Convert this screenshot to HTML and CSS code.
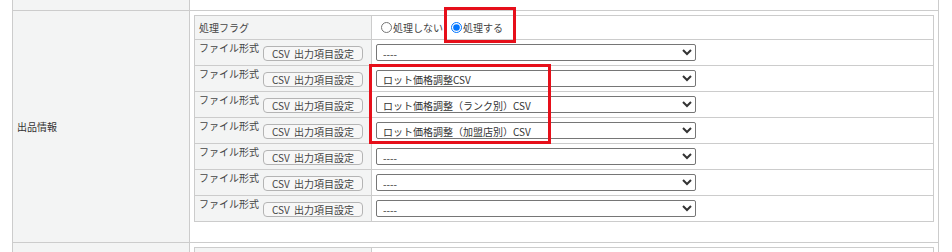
FILE: index.html
```html
<!DOCTYPE html>
<html lang="ja">
<head>
<meta charset="utf-8">
<title>出品情報</title>
<link rel="stylesheet" href="styles.css">
</head>
<body>
<div class="frame">
  <div class="row row-top"><div class="head"></div><div class="body"></div></div>
  <div class="row row-main">
    <div class="head"><span>出品情報</span></div>
    <div class="body">
      <div class="inner">
        <div class="irow irow-flag">
          <div class="ilabel"><span class="lbl lbl-flag">処理フラグ</span></div>
          <div class="ival ival-flag">
            <label class="opt"><input type="radio" name="flag" class="radio">処理しない</label>
            <label class="opt"><input type="radio" name="flag" class="radio" checked>処理する</label>
          </div>
        </div>
        <div class="irow">
          <div class="ilabel"><span class="lbl">ファイル形式</span><button class="btn" type="button">CSV 出力項目設定</button></div>
          <div class="ival"><select class="sel"><option>----</option></select></div>
        </div>
        <div class="irow">
          <div class="ilabel"><span class="lbl">ファイル形式</span><button class="btn" type="button">CSV 出力項目設定</button></div>
          <div class="ival"><select class="sel"><option>ロット価格調整CSV</option></select></div>
        </div>
        <div class="irow">
          <div class="ilabel"><span class="lbl">ファイル形式</span><button class="btn" type="button">CSV 出力項目設定</button></div>
          <div class="ival"><select class="sel"><option>ロット価格調整（ランク別）CSV</option></select></div>
        </div>
        <div class="irow">
          <div class="ilabel"><span class="lbl">ファイル形式</span><button class="btn" type="button">CSV 出力項目設定</button></div>
          <div class="ival"><select class="sel"><option>ロット価格調整（加盟店別）CSV</option></select></div>
        </div>
        <div class="irow">
          <div class="ilabel"><span class="lbl">ファイル形式</span><button class="btn" type="button">CSV 出力項目設定</button></div>
          <div class="ival"><select class="sel"><option>----</option></select></div>
        </div>
        <div class="irow">
          <div class="ilabel"><span class="lbl">ファイル形式</span><button class="btn" type="button">CSV 出力項目設定</button></div>
          <div class="ival"><select class="sel"><option>----</option></select></div>
        </div>
        <div class="irow">
          <div class="ilabel"><span class="lbl">ファイル形式</span><button class="btn" type="button">CSV 出力項目設定</button></div>
          <div class="ival"><select class="sel"><option>----</option></select></div>
        </div>
      </div>
    </div>
  </div>
  <div class="row row-next">
    <div class="head"></div>
    <div class="body">
      <div class="inner inner-next">
        <div class="irow irow-next"><div class="ilabel"></div><div class="ival"></div></div>
      </div>
    </div>
  </div>
</div>
<div class="mark mark-flag"></div>
<div class="mark mark-csv"></div>
</body>
</html>
```

FILE: styles.css
```css
html, body {
  margin: 0;
  padding: 0;
  background: #ffffff;
}
body {
  position: relative;
  height: 252px;
  overflow: hidden;
  font-family: "Noto Sans CJK JP", "Noto Sans", sans-serif;
  font-size: 10px;
  color: #333333;
}
.frame {
  margin-left: 12px;
  width: 927px;
  box-sizing: border-box;
  border-left: 1px solid #cccccc;
  border-right: 1px solid #cccccc;
}
.row {
  display: grid;
  grid-template-columns: 177px 1fr;
  border-bottom: 1px solid #cccccc;
}
.head {
  background: #f3f4f4;
  border-right: 1px solid #cccccc;
  box-sizing: border-box;
  display: flex;
  align-items: center;
  padding-left: 4px;
}
.row-top {
  height: 10px;
}
.row-main .body {
  padding: 4px 4px 20px 4px;
}
.row-next {
  height: 9px;
  overflow: hidden;
  border-bottom: none;
}
.row-next .body {
  padding: 4px 4px 0 4px;
}
.inner {
  border: 1px solid #cccccc;
}
.inner-next {
  border-bottom: none;
}
.irow {
  display: grid;
  grid-template-columns: 177px 1fr;
  height: 25px;
}
.irow + .irow {
  border-top: 1px solid #cccccc;
}
.irow-flag {
  height: 23px;
}
.irow-next {
  height: 4px;
}
.ilabel {
  background: #f3f4f4;
  border-right: 1px solid #cccccc;
  box-sizing: border-box;
  display: flex;
  align-items: flex-start;
  padding-left: 4px;
}
.lbl {
  line-height: 13px;
  margin-top: 1px;
  color: #444444;
  white-space: nowrap;
}
.lbl-flag {
  margin-top: 5px;
}
.btn {
  margin: 6px 0 0 4px;
  width: 100px;
  height: 15px;
  padding: 0;
  box-sizing: border-box;
  border: 1px solid #b4b4b4;
  border-radius: 4px;
  background: #f7f7f7;
  font-family: "Noto Sans CJK JP", "Noto Sans", sans-serif;
  font-size: 10px;
  line-height: 13px;
  color: #444444;
  white-space: nowrap;
  word-spacing: 2px;
}
.ival {
  padding: 0 4px;
}
.ival-flag {
  display: flex;
  align-items: center;
}
.opt {
  display: flex;
  align-items: center;
  line-height: 13px;
  color: #444444;
  margin-right: 3px;
}
.radio {
  width: 11px;
  height: 11px;
  margin: 0 1px 0 5px;
}
.sel {
  display: block;
  margin-top: 4px;
  width: 320px;
  height: 17px;
  padding: 0 2px;
  box-sizing: border-box;
  font-family: "Noto Sans CJK JP", "Noto Sans", sans-serif;
  font-size: 10px;
  color: #333333;
  border: 1px solid #767676;
  border-radius: 2px;
  background-color: #ffffff;
}
.mark {
  position: absolute;
  border: 3px solid #e60f1a;
  box-sizing: border-box;
}
.mark-flag {
  left: 444px;
  top: 7px;
  width: 72px;
  height: 36px;
}
.mark-csv {
  left: 369px;
  top: 64px;
  width: 182px;
  height: 80px;
}
```
